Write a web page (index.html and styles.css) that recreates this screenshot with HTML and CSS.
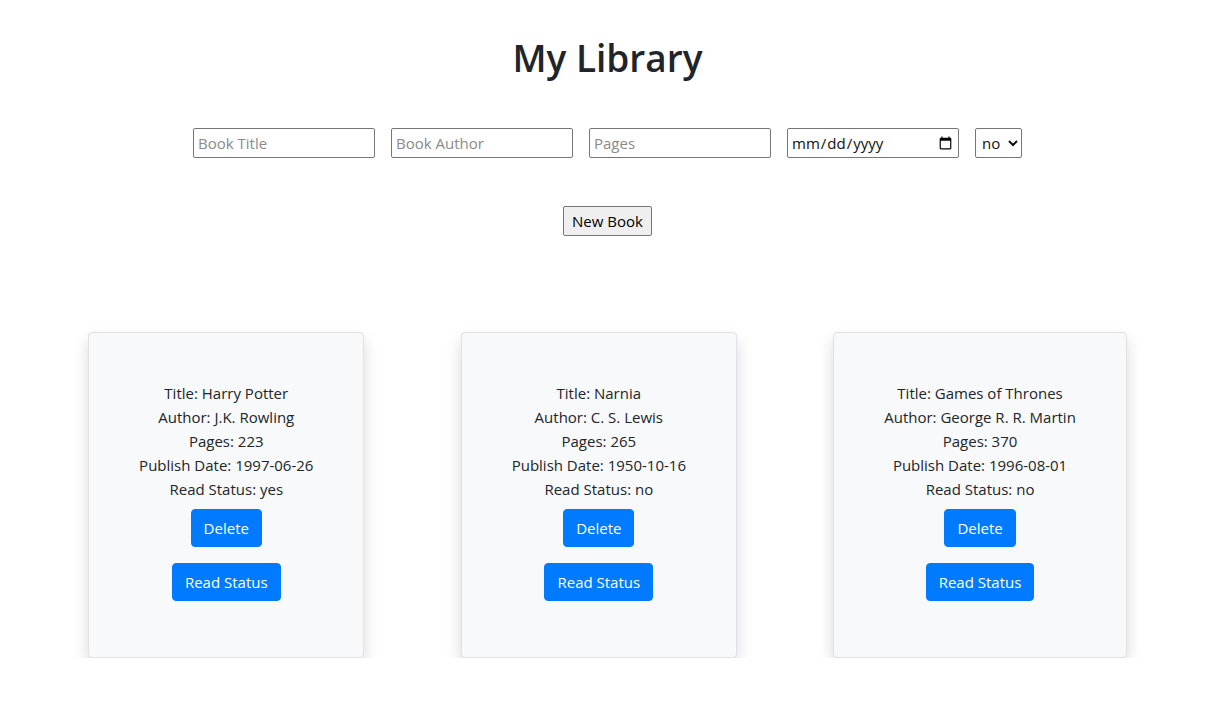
FILE: index.html
```html
<!DOCTYPE html>
<html lang="en">
<head>
<meta charset="utf-8">
<title>My Library</title>
<link rel="stylesheet" href="styles.css">
</head>
<body>
<div class="page">
  <h1 class="title">My Library</h1>
  <form class="book-form">
    <div class="fields">
      <input class="field" type="text" placeholder="Book Title">
      <input class="field" type="text" placeholder="Book Author">
      <input class="field" type="text" placeholder="Pages">
      <input class="field date" type="date">
      <select class="field status">
        <option>no</option>
        <option>yes</option>
      </select>
    </div>
    <div class="submit-row">
      <button type="button" class="new-book">New Book</button>
    </div>
  </form>
  <div class="library">
    <div class="card">
      <p class="line">Title: Harry Potter</p>
      <p class="line">Author: J.K. Rowling</p>
      <p class="line">Pages: 223</p>
      <p class="line">Publish Date: 1997-06-26</p>
      <p class="line">Read Status: yes</p>
      <button class="btn">Delete</button>
      <button class="btn">Read Status</button>
    </div>
    <div class="card">
      <p class="line">Title: Narnia</p>
      <p class="line">Author: C. S. Lewis</p>
      <p class="line">Pages: 265</p>
      <p class="line">Publish Date: 1950-10-16</p>
      <p class="line">Read Status: no</p>
      <button class="btn">Delete</button>
      <button class="btn">Read Status</button>
    </div>
    <div class="card">
      <p class="line">Title: Games of Thrones</p>
      <p class="line">Author: George R. R. Martin</p>
      <p class="line">Pages: 370</p>
      <p class="line">Publish Date: 1996-08-01</p>
      <p class="line">Read Status: no</p>
      <button class="btn">Delete</button>
      <button class="btn">Read Status</button>
    </div>
  </div>
</div>
</body>
</html>
```

FILE: styles.css
```css
* { box-sizing: border-box; }

body {
  margin: 0;
  background: #fff;
  color: #212529;
  font-family: "Open Sans", "Noto Sans", sans-serif;
  font-size: 15px;
  line-height: 24px;
}

.page {
  width: 1215px;
}

.title {
  margin: 34px 0 0;
  text-align: center;
  font-size: 37px;
  font-weight: 600;
  line-height: 48px;
}

.book-form {
  margin-top: 46px;
}

.fields {
  display: flex;
  justify-content: center;
  gap: 16px;
}

.field {
  height: 30px;
  width: 182px;
  margin: 0;
  padding: 1px 4px;
  border: 1px solid #767676;
  border-radius: 2px;
  font-family: "Open Sans", "Noto Sans", sans-serif;
  font-size: 15px;
  color: #111;
  background: #fff;
}

.field::placeholder { color: #8a8a8a; }

.field.date { width: 172px; padding: 1px 3px; }

.field.status { width: 47px; padding: 1px 0 1px 2px; }

.submit-row {
  display: flex;
  justify-content: center;
  margin-top: 48px;
}

.new-book {
  height: 30px;
  padding: 1px 8px;
  border: 1px solid #767676;
  border-radius: 2px;
  background: #efefef;
  color: #000;
  font-family: "Open Sans", "Noto Sans", sans-serif;
  font-size: 15px;
}

.library {
  display: flex;
  justify-content: space-around;
  align-items: flex-start;
  padding: 0 40px;
  margin-top: 96px;
}

.card {
  display: flex;
  flex-direction: column;
  align-items: center;
  padding: 48px 50px;
  background: #f8f9fa;
  border: 1px solid #dee2e6;
  border-radius: 4px;
  box-shadow: 0 8px 16px rgba(0, 0, 0, 0.15);
  text-align: center;
}

.line { margin: 0; white-space: nowrap; }

.btn {
  margin: 8px 0;
  padding: 6px 12px;
  border: 1px solid #007bff;
  border-radius: 4px;
  background: #007bff;
  color: #fff;
  font-family: "Open Sans", "Noto Sans", sans-serif;
  font-size: 15px;
  line-height: 24px;
}
```
